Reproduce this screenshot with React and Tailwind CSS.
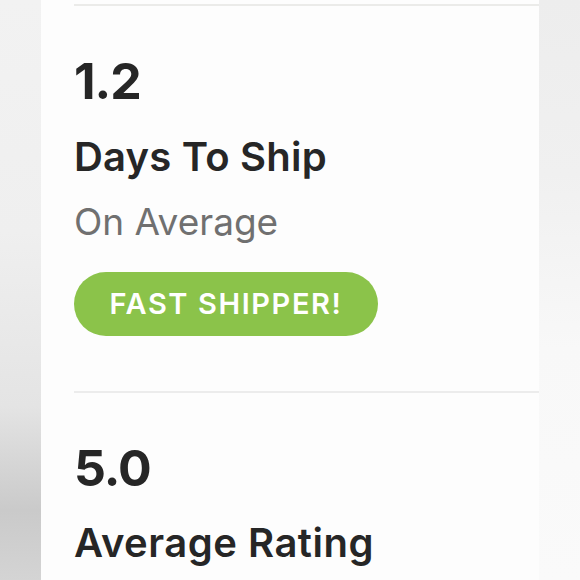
export default function App() {
  const font = { fontFamily: 'Inter, "Noto Sans", sans-serif' };
  return (
    <div className="w-[580px] h-[580px] flex overflow-hidden" style={font}>
      <div className="w-[41px] h-full bg-[linear-gradient(180deg,#f2f2f2_0%,#efefef_40%,#e4e4e4_70%,#cacaca_88%,#d4d4d4_100%)]" />
      <div className="flex-1 h-full bg-[#fdfdfd] flex flex-col pl-[33px]">
        <div className="mt-[4px] h-[2px] bg-[#ebebe9]" />
        <div className="mt-[50px] text-[50px] leading-none font-bold text-[#262626] tracking-[-1px]">1.2</div>
        <div className="mt-[31px] text-[40px] leading-none font-semibold text-[#262626] tracking-[0.2px]">Days To Ship</div>
        <div className="mt-[26px] text-[37px] leading-none text-[#707070]">On Average</div>
        <div className="mt-[32px] w-[304px] h-[64px] rounded-full bg-[#8bc34a] flex items-center justify-center text-white text-[29px] font-semibold tracking-[1.6px]">FAST SHIPPER!</div>
        <div className="mt-[55px] h-[2px] bg-[#ececec]" />
        <div className="mt-[50px] text-[50px] leading-none font-bold text-[#262626] tracking-[-1px]">5.0</div>
        <div className="mt-[30px] text-[40px] leading-none font-semibold text-[#262626] tracking-[0.5px]">Average Rating</div>
      </div>
      <div className="w-[41px] h-full bg-[linear-gradient(180deg,#ededed_0%,#f0f0f0_30%,#f8f8f8_60%,#fafafa_100%)]" />
    </div>
  );
}
